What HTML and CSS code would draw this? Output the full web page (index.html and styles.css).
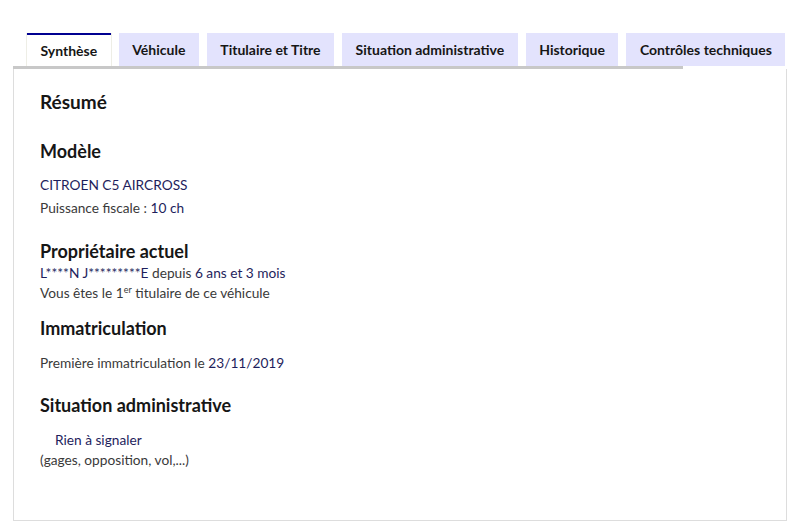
FILE: index.html
```html
<!DOCTYPE html>
<html lang="fr">
<head>
    <meta charset="UTF-8">
    <meta name="viewport" content="width=device-width, initial-scale=1.0">
    <title>Synthèse du véhicule</title>
    <link rel="stylesheet" href="styles.css">
</head>
<body>
    <div class="tabs">
        <ul class="tab-list">
            <li class="tab active">Synthèse</li>
            <li class="tab">Véhicule</li>
            <li class="tab">Titulaire et Titre</li>
            <li class="tab">Situation administrative</li>
            <li class="tab">Historique</li>
            <li class="tab">Contrôles techniques</li>
        </ul>
        <div class="tab-bar"></div>
        <div class="panel">
            <h2 class="title">Résumé</h2>

            <h3 class="section first">Modèle</h3>
            <p class="line value tall">CITROEN C5 AIRCROSS</p>
            <p class="line tall">Puissance fiscale : <span class="value">10 ch</span></p>

            <h3 class="section owner">Propriétaire actuel</h3>
            <p class="line"><span class="value">L****N J*********E</span> depuis <span class="value">6 ans et 3 mois</span></p>
            <p class="line">Vous êtes le 1<sup>er</sup> titulaire de ce véhicule</p>

            <h3 class="section immat">Immatriculation</h3>
            <p class="line tall">Première immatriculation le <span class="value">23/11/2019</span></p>

            <h3 class="section admin">Situation administrative</h3>
            <p class="line value indent">Rien à signaler</p>
            <p class="line">(gages, opposition, vol,...)</p>
        </div>
    </div>
</body>
</html>
```

FILE: styles.css
```css
/* Onglets de synthèse du véhicule */
body {
    font-family: Lato, "Noto Sans", sans-serif;
    background-color: #fff;
    color: #3a3a3a;
    margin: 0;
    padding: 0;
}
.tabs {
    width: 774px;
    margin: 0 0 0 13px;
    padding-top: 33px;
}
.tab-list {
    display: flex;
    gap: 8px;
    margin: 0;
    padding: 0 0 0 14px;
    list-style: none;
}
.tab {
    height: 33px;
    line-height: 33px;
    padding: 0 13.5px;
    background-color: #e3e3fd;
    color: #161616;
    font-size: 14px;
    font-weight: 700;
    box-sizing: border-box;
    white-space: nowrap;
}
.tab.active {
    background-color: #fff;
    border-top: 2px solid #000091;
    line-height: 31px;
    box-shadow: -1px 0 0 #eeeee6, 1px 0 0 #eeeee6;
}
.tab-bar {
    width: 670px;
    height: 3px;
    background-color: #c8c8c8;
}
.panel {
    height: 452px;
    border: 1px solid #dddddd;
    border-top: none;
    padding: 21px 0 0 26px;
    box-sizing: border-box;
}
.title {
    margin: 0;
    font-size: 19px;
    line-height: 24px;
    color: #161616;
}
.section {
    margin: 13px 0 0;
    font-size: 18px;
    line-height: 24px;
    color: #161616;
}
.section.first {
    margin-top: 25px;
    margin-bottom: 10px;
}
.section.owner {
    margin-top: 20px;
}
.section.immat {
    margin-top: 13px;
    margin-bottom: 11px;
}
.section.admin {
    margin-top: 19px;
    margin-bottom: 13px;
}
.line {
    margin: 0;
    font-size: 13.7px;
    line-height: 20px;
}
.line.tall {
    line-height: 23px;
}
.value {
    color: #1e1e5c;
}
.indent {
    padding-left: 15px;
}
sup {
    font-size: 9px;
    line-height: 0;
    vertical-align: baseline;
    position: relative;
    top: -0.6em;
}
```
